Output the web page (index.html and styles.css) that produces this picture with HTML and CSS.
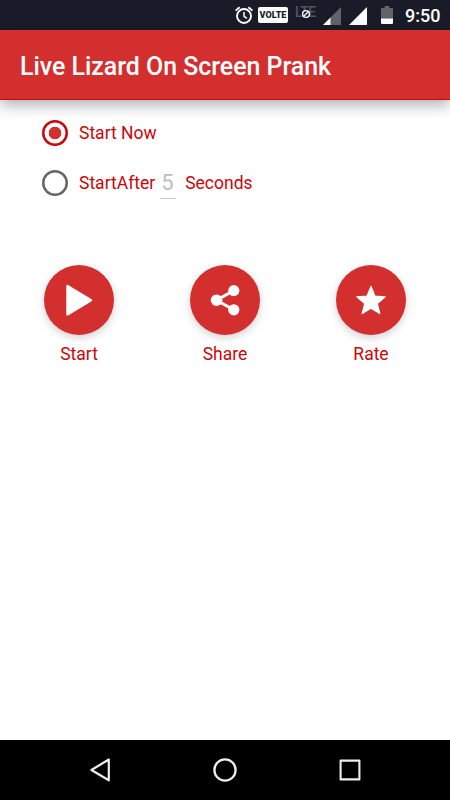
FILE: index.html
```html
<!DOCTYPE html>
<html lang="en">
<head>
    <meta charset="UTF-8">
    <meta name="viewport" content="width=device-width, initial-scale=1.0">
    <title>Live Lizard On Screen Prank</title>
    <link rel="stylesheet" href="styles.css">
</head>
<body>
    <div class="status-bar">
        <svg class="icon-alarm" width="20" height="20" viewBox="0 0 20 20" fill="none" stroke="#fff">
            <circle cx="10" cy="11" r="7" stroke-width="1.9"/>
            <path d="M10 7v4.3l3 2" stroke-width="1.5"/>
            <path d="M1.6 5.6l4-3.4M18.4 5.6l-4-3.4" stroke-width="1.9"/>
        </svg>
        <span class="volte">VOLTE</span>
        <span class="lte">LTE
            <svg class="lte-off" width="10" height="10" viewBox="0 0 10 10">
                <circle cx="5" cy="5" r="3.4" fill="#1a1b28" stroke="#fff" stroke-width="1.4"/>
                <path d="M7.2 2.8L2.8 7.2" stroke="#fff" stroke-width="1.3"/>
            </svg>
        </span>
        <svg class="icon-signal" width="18" height="18" viewBox="0 0 18 18">
            <path d="M18 0v18H0z" fill="#626369"/>
            <path d="M7.5 10.5V18H0z" fill="#fff"/>
        </svg>
        <svg class="icon-signal-full" width="18" height="18" viewBox="0 0 18 18">
            <path d="M18 0v18H0z" fill="#fff"/>
        </svg>
        <svg class="icon-battery" width="12" height="18" viewBox="0 0 12 18">
            <path d="M3.7 0h4.6v2H12v10.5H0V2h3.7z" fill="#626369"/>
            <path d="M0 12.5h12V17q0 1-1 1H1q-1 0-1-1z" fill="#fff"/>
        </svg>
        <span class="time">9:50</span>
    </div>

    <header class="toolbar">
        <h1>Live Lizard On Screen Prank</h1>
    </header>

    <main class="content">
        <form class="options">
            <label class="option">
                <input type="radio" name="mode" checked>
                <span>Start Now</span>
            </label>
            <label class="option">
                <input type="radio" name="mode">
                <span>StartAfter</span>
                <span class="delay">5</span>
                <span>Seconds</span>
            </label>
        </form>

        <div class="actions">
            <div class="action">
                <button type="button" class="fab" aria-label="Start">
                    <svg width="70" height="70" viewBox="0 0 70 70">
                        <path d="M23.5 21v28.4L47 35.2z" fill="#fff" stroke="#fff" stroke-width="2.4" stroke-linejoin="round"/>
                    </svg>
                </button>
                <span>Start</span>
            </div>
            <div class="action">
                <button type="button" class="fab" aria-label="Share">
                    <svg width="70" height="70" viewBox="0 0 70 70" fill="#fff">
                        <path d="M43.7 25.6L26.5 35.2l17.2 9.6" fill="none" stroke="#fff" stroke-width="3"/>
                        <circle cx="43.8" cy="25.6" r="5.6"/>
                        <circle cx="26.6" cy="35.2" r="5.8"/>
                        <circle cx="43.8" cy="44.8" r="5.6"/>
                    </svg>
                </button>
                <span>Share</span>
            </div>
            <div class="action">
                <button type="button" class="fab" aria-label="Rate">
                    <svg width="70" height="70" viewBox="0 0 70 70">
                        <path d="M35 21.4l3.9 9.6 10.3.8-7.9 6.7 2.5 10.1L35 43.2l-8.8 5.4 2.5-10.1-7.9-6.7 10.3-.8z" fill="#fff" stroke="#fff" stroke-width="1.2" stroke-linejoin="round"/>
                    </svg>
                </button>
                <span>Rate</span>
            </div>
        </div>
    </main>

    <nav class="nav-bar">
        <svg width="26" height="26" viewBox="0 0 26 26" fill="none" stroke="#eee" stroke-width="2.2" stroke-linejoin="round">
            <path d="M21.8 2.5v20.8L4.4 13z"/>
        </svg>
        <svg width="26" height="26" viewBox="0 0 26 26" fill="none" stroke="#eee" stroke-width="2.3">
            <circle cx="13" cy="13" r="10.6"/>
        </svg>
        <svg width="26" height="26" viewBox="0 0 26 26" fill="none" stroke="#eee" stroke-width="2.1" stroke-linejoin="round">
            <path d="M3.6 3.6h18.8v18.8H3.6z"/>
        </svg>
    </nav>
</body>
</html>
```

FILE: styles.css
```css
* {
    margin: 0;
    padding: 0;
    box-sizing: border-box;
}

body {
    height: 100vh;
    display: flex;
    flex-direction: column;
    background: #fff;
    color: #cc0609;
    font-family: Roboto, sans-serif;
    overflow: hidden;
}

svg {
    display: block;
    flex-shrink: 0;
}

/* Status bar */
.status-bar {
    height: 30px;
    flex-shrink: 0;
    display: flex;
    justify-content: flex-end;
    align-items: center;
    padding-right: 10px;
    background: #1a1b28;
    color: #fff;
}

.icon-alarm {
    margin-right: 4px;
}

.volte {
    width: 30px;
    height: 16px;
    margin-right: 7px;
    border-radius: 2px;
    background: #fff;
    color: #1a1b28;
    font-size: 9px;
    font-weight: 900;
    line-height: 17px;
    text-align: center;
}

.lte {
    position: relative;
    width: 22px;
    height: 18px;
    margin-right: 6px;
    color: #54555e;
    font-size: 14px;
    font-weight: 500;
    line-height: 12px;
    letter-spacing: -0.6px;
}

.lte-off {
    position: absolute;
    left: 6px;
    top: 3px;
}

.icon-signal,
.icon-signal-full {
    margin-top: 2px;
    margin-right: 8px;
}

.icon-signal-full {
    margin-right: 14px;
}

.icon-battery {
    margin-right: 12px;
}

.time {
    width: 35px;
    padding-top: 2px;
    font-size: 18px;
    font-weight: 500;
    line-height: 28px;
}

/* Title */
.toolbar {
    height: 70px;
    flex-shrink: 0;
    display: flex;
    align-items: center;
    padding: 4px 20px 0;
    border-bottom: 1px solid #cc0609;
    background: #d32f2f;
    color: #fff;
    box-shadow: 0 5px 14px rgba(0, 0, 0, 0.32);
}

.toolbar h1 {
    font-size: 24.9px;
    font-weight: 500;
    white-space: nowrap;
}

.content {
    flex: 1;
    padding: 8px 44px 0;
    font-size: 17.5px;
}

.option {
    height: 50px;
    display: flex;
    align-items: center;
}

.option input {
    appearance: none;
    width: 26px;
    height: 26px;
    margin: 0 11px 0 -2px;
    border-radius: 50%;
    box-shadow: inset 0 0 0 2.5px #666;
}

.option input:checked {
    background: radial-gradient(circle, #d32f2f 6px, transparent 6.6px);
    box-shadow: inset 0 0 0 2.5px #cc0609;
}

.delay {
    width: 16px;
    height: 33px;
    margin: -2px 9px 0 5px;
    padding-left: 1px;
    border-bottom: 1px solid #c8c8c8;
    color: #bdbdbd;
    font-size: 22px;
    line-height: 33px;
}

/* Round buttons */
.actions {
    display: flex;
    justify-content: space-between;
    padding-top: 57px;
}

.action {
    width: 70px;
    display: flex;
    flex-direction: column;
    align-items: center;
    gap: 9px;
    line-height: 20px;
}

.fab {
    width: 70px;
    height: 70px;
    border: none;
    border-radius: 50%;
    background: #d32f2f;
    box-shadow: 0 3px 9px rgba(0, 0, 0, 0.18);
}

/* Navigation bar */
.nav-bar {
    height: 60px;
    flex-shrink: 0;
    display: flex;
    justify-content: space-between;
    align-items: center;
    padding: 0 87px;
    background: #000;
}
```
